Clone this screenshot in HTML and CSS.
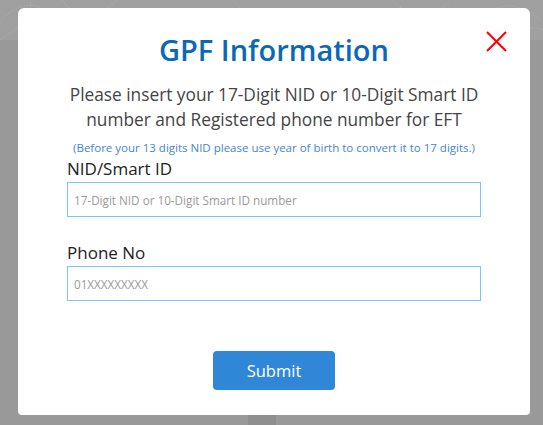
FILE: index.html
```html
<!DOCTYPE html>
<html>
<head>
<meta charset="utf-8">
<link rel="stylesheet" href="styles.css">
</head>
<body>
<div class="backdrop">
  <svg class="pattern" width="543" height="40" viewBox="0 0 543 40">
    <g fill="none" stroke="#b2b2b2" stroke-width="1" stroke-dasharray="1 2">
      <path d="M-5 30 C 10 5, 30 0, 45 10"/>
      <path d="M60 -5 C 70 20, 100 20, 120 -3"/>
      <path d="M150 35 C 160 10, 190 5, 210 25"/>
      <path d="M230 -5 C 245 20, 270 25, 290 5"/>
      <path d="M310 30 C 330 5, 350 5, 365 25"/>
      <path d="M390 -4 C 400 15, 430 20, 450 2"/>
      <path d="M470 30 C 490 0, 520 0, 540 20"/>
      <path d="M0 40 C 20 25, 35 20, 30 0"/>
      <path d="M500 40 C 515 30, 530 25, 545 30"/>
    </g>
  </svg>
  <div class="modal">
    <button class="close" type="button" aria-label="Close">
      <svg width="21" height="21" viewBox="0 0 21 21">
        <path d="M1 1 L20 20 M20 1 L1 20" stroke="#ff0000" stroke-width="2" fill="none"/>
      </svg>
    </button>
    <h1 class="title">GPF Information</h1>
    <p class="desc">Please insert your 17-Digit NID or 10-Digit Smart ID number and Registered phone number for EFT</p>
    <p class="note">(Before your 13 digits NID please use year of birth to convert it to 17 digits.)</p>
    <div class="field">
      <label class="label">NID/Smart ID</label>
      <input class="input" type="text" placeholder="17-Digit NID or 10-Digit Smart ID number">
    </div>
    <div class="field field-phone">
      <label class="label">Phone No</label>
      <input class="input" type="text" placeholder="01XXXXXXXXX">
    </div>
    <div class="actions">
      <button class="submit" type="button">Submit</button>
    </div>
  </div>
  <div class="peek"></div>
</div>
</body>
</html>
```
FILE: styles.css
```css
* { box-sizing: border-box; }
html, body { margin: 0; padding: 0; }
body {
  width: 543px;
  height: 425px;
  overflow: hidden;
  background: #999999;
  font-family: "Open Sans", "Noto Sans", sans-serif;
}
.backdrop {
  position: relative;
  width: 543px;
  height: 425px;
  padding: 8px 13px 0 18px;
  background: linear-gradient(#a0a0a0 0, #a0a0a0 40px, #999999 40px);
}
.pattern {
  position: absolute;
  left: 0;
  top: 0;
}
.modal {
  position: relative;
  width: 512px;
  height: 407px;
  background: #ffffff;
  border-radius: 6px 6px 4px 4px;
  padding: 0 49px;
  display: flex;
  flex-direction: column;
}
.close {
  position: absolute;
  top: 23px;
  right: 23px;
  width: 21px;
  height: 21px;
  padding: 0;
  border: 0;
  background: none;
  line-height: 0;
}
.title {
  margin: 22px 0 0;
  text-align: center;
  font-size: 29px;
  font-weight: 600;
  line-height: 40px;
  color: #0b68b8;
}
.desc {
  margin: 12px -10px 0;
  text-align: center;
  font-size: 17.3px;
  line-height: 25px;
  color: #444444;
}
.note {
  margin: 8px -10px 0;
  text-align: center;
  font-size: 11.5px;
  line-height: 16px;
  color: #3f86d8;
}
.field {
  display: flex;
  flex-direction: column;
}
.label {
  font-size: 17px;
  line-height: 26px;
  color: #222222;
}
.input {
  height: 35px;
  border: 1px solid #7cc6f5;
  padding: 0 6px;
  font-family: inherit;
  font-size: 11.7px;
  color: #333;
  outline: none;
}
.input::placeholder { color: #9a9a9a; }
.field-phone { margin-top: 23px; }
.actions {
  display: flex;
  justify-content: center;
  margin-top: 50px;
}
.submit {
  width: 122px;
  height: 39px;
  border: 0;
  border-radius: 4px;
  background: #3187d7;
  color: #ffffff;
  font-family: inherit;
  font-size: 16.5px;
}
.peek {
  position: absolute;
  left: 248px;
  top: 415px;
  width: 28px;
  height: 10px;
  background: #8f8f8f;
}
```
